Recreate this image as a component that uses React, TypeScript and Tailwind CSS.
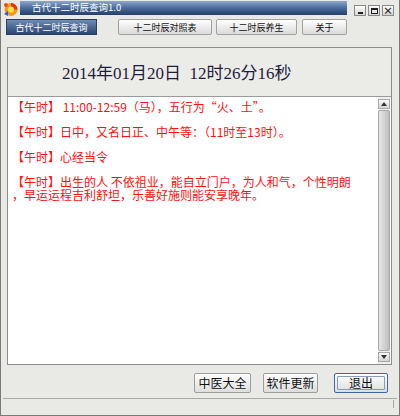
const lines: { text: string; gap: boolean }[] = [
  { text: "【午时】 11:00-12:59（马），五行为“火、土”。", gap: true },
  { text: "【午时】日中，又名日正、中午等：（11时至13时）。", gap: true },
  { text: "【午时】心经当令", gap: true },
  { text: "【午时】出生的人 不依祖业，能自立门户，为人和气，个性明朗", gap: false },
  { text: "，早运运程吉利舒坦，乐善好施则能安享晚年。", gap: false },
]

function AppIcon() {
  return (
    <svg width="17" height="16" viewBox="0 0 17 16">
      <circle cx="9" cy="8.5" r="6.5" fill="#f39a1c" />
      <path d="M9 2 A6.5 6.5 0 0 1 15.5 8.5 L9 8.5 Z" fill="#e2341c" />
      <circle cx="9" cy="8.5" r="3" fill="#ffe24a" />
      <path d="M2 13 L6 10 L6 15 Z" fill="#2f5fb8" />
      <circle cx="4" cy="4" r="2" fill="#e84b1e" />
    </svg>
  )
}

function WinButton({ children }: { children: React.ReactNode }) {
  return (
    <div className="w-[12px] h-[11px] border border-[#8a8a8a] bg-linear-to-b from-[#fdfdfd] to-[#d6d6d6] flex items-center justify-center text-[#222]">
      {children}
    </div>
  )
}

function TitleBar() {
  return (
    <div className="h-[17px] flex items-start pt-[1px]">
      <div className="w-[19px] h-[15px] flex items-center justify-center">
        <AppIcon />
      </div>
      <div className="flex-1 h-[14px] bg-linear-to-b from-[#8ea8cc] via-[#4b6b9a] to-[#243f6b] flex items-center pl-[12px]">
        <span className="text-[9.5px] leading-none text-white">古代十二时辰查询1.0</span>
      </div>
      <div className="flex gap-[2px] pl-[7px] pr-[5px] pt-[4px]">
        <WinButton>
          <div className="w-[5px] h-[2px] bg-[#222] mt-[4px]" />
        </WinButton>
        <WinButton>
          <div className="w-[7px] h-[6px] border border-[#222] border-t-2" />
        </WinButton>
        <WinButton>
          <span className="text-[10px] leading-none font-bold">×</span>
        </WinButton>
      </div>
    </div>
  )
}

function Tab({ label, active, className }: { label: string; active?: boolean; className: string }) {
  return (
    <div
      className={
        active
          ? `${className} h-[16px] flex items-center justify-center border border-[#2a3f60] bg-linear-to-b from-[#6e8bb3] to-[#2c4770] text-white text-[9px] leading-none`
          : `${className} h-[16px] flex items-center justify-center border border-[#a2a2a2] rounded-[2px] bg-linear-to-b from-[#ffffff] to-[#dadada] text-[#111] text-[9px] leading-none`
      }
    >
      {label}
    </div>
  )
}

function Tabs() {
  return (
    <div className="mt-[2px] flex pl-[5px]">
      <Tab label="古代十二时辰查询" active className="w-[91px]" />
      <Tab label="十二时辰对照表" className="w-[94px] ml-[21px]" />
      <Tab label="十二时辰养生" className="w-[81px] ml-[4px]" />
      <Tab label="关于" className="w-[45px] ml-[5px]" />
    </div>
  )
}

function ScrollBar() {
  return (
    <div className="w-[12px] mr-[1px] py-[2px] flex flex-col bg-[#eeeeec]">
      <div className="h-[10px] border border-[#a8a8a8] bg-linear-to-b from-[#fafafa] to-[#d4d4d4] flex items-center justify-center">
        <svg width="6" height="4" viewBox="0 0 6 4">
          <path d="M0 4 L3 0 L6 4 Z" fill="#333" />
        </svg>
      </div>
      <div className="flex-1 my-[1px] border border-[#a8a8a8] rounded-[2px] bg-linear-to-r from-[#e6e6e6] via-[#d2d2d2] to-[#bdbdbd]" />
      <div className="h-[10px] border border-[#a8a8a8] bg-linear-to-b from-[#fafafa] to-[#d4d4d4] flex items-center justify-center">
        <svg width="6" height="4" viewBox="0 0 6 4">
          <path d="M0 0 L6 0 L3 4 Z" fill="#333" />
        </svg>
      </div>
    </div>
  )
}

function Panel() {
  return (
    <div className="mt-[12px] ml-[6px] mr-[7px] h-[318px] border border-[#8c8c8c] bg-[#ebebe8] flex flex-col">
      <div className="h-[48px] flex items-center pl-[54px] pt-[2px]">
        <span className="text-[17px] leading-none text-[#1e1e3c] font-['Liberation_Serif','Noto_Sans_CJK_SC',serif] whitespace-pre">
          2014年01月20日  12时26分16秒
        </span>
      </div>
      <div className="flex-1 border-t border-[#9a9a9a] bg-white flex">
        <div className="flex-1 pl-[4px] pt-[3px] text-[12px] leading-[13px] text-[#ff1010]">
          {lines.map((l, i) => (
            <div key={i} className={l.gap ? "whitespace-pre mb-[12px]" : "whitespace-pre"}>
              {l.text}
            </div>
          ))}
        </div>
        <ScrollBar />
      </div>
    </div>
  )
}

function Footer() {
  return (
    <>
      <div className="mt-[8px] h-[20px] flex pl-[193px] text-[12px] leading-none text-[#111]">
        <div className="w-[57px] border border-[#9c9c9c] rounded-[2px] bg-linear-to-b from-[#fdfdfd] to-[#dedede] flex items-center justify-center">
          中医大全
        </div>
        <div className="w-[55px] ml-[12px] border border-[#9c9c9c] rounded-[2px] bg-linear-to-b from-[#fdfdfd] to-[#dedede] flex items-center justify-center">
          软件更新
        </div>
        <div className="w-[54px] ml-[16px] border border-[#3f64a8] rounded-[2px] bg-linear-to-b from-[#fdfdfd] to-[#dedede] flex items-center justify-center p-[2px]">
          <div className="h-full flex-1 border border-[#8a9ab8] rounded-[1px] flex items-center justify-center">
            退出
          </div>
        </div>
      </div>
      <div className="mt-[5px] mx-[2px] border-t border-[#a8a8a8] flex justify-end pr-[3px]">
        <div className="w-px h-[8px] mt-[1px] bg-[#a8a8a8]" />
      </div>
    </>
  )
}

export default function App() {
  return (
    <div className="w-[400px] h-[416px] bg-[#e9e9e5] border-x border-b border-[#7a7a7a] flex flex-col font-['Noto_Sans_CJK_SC',sans-serif] overflow-hidden">
      <TitleBar />
      <Tabs />
      <Panel />
      <Footer />
    </div>
  )
}
